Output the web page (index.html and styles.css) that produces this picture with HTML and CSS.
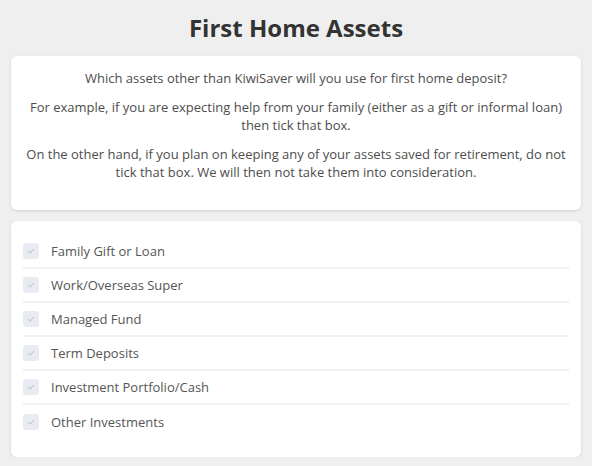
FILE: index.html
```html
<!DOCTYPE html>
<html lang="en">
<head>
<meta charset="utf-8">
<title>First Home Assets</title>
<link rel="stylesheet" href="styles.css">
</head>
<body>
<main class="page">
  <h1 class="title">First Home Assets</h1>
  <section class="card intro">
    <p>Which assets other than KiwiSaver will you use for first home deposit?</p>
    <p>For example, if you are expecting help from your family (either as a gift or informal loan) then tick that box.</p>
    <p>On the other hand, if you plan on keeping any of your assets saved for retirement, do not tick that box. We will then not take them into consideration.</p>
  </section>
  <section class="card options">
    <label class="option"><span class="box"><svg viewBox="0 0 16 16"><path d="M5.5 8.3l1.8 1.7 3.3-3.6"/></svg></span><span class="label">Family Gift or Loan</span></label>
    <label class="option"><span class="box"><svg viewBox="0 0 16 16"><path d="M5.5 8.3l1.8 1.7 3.3-3.6"/></svg></span><span class="label">Work/Overseas Super</span></label>
    <label class="option"><span class="box"><svg viewBox="0 0 16 16"><path d="M5.5 8.3l1.8 1.7 3.3-3.6"/></svg></span><span class="label">Managed Fund</span></label>
    <label class="option"><span class="box"><svg viewBox="0 0 16 16"><path d="M5.5 8.3l1.8 1.7 3.3-3.6"/></svg></span><span class="label">Term Deposits</span></label>
    <label class="option"><span class="box"><svg viewBox="0 0 16 16"><path d="M5.5 8.3l1.8 1.7 3.3-3.6"/></svg></span><span class="label">Investment Portfolio/Cash</span></label>
    <label class="option last"><span class="box"><svg viewBox="0 0 16 16"><path d="M5.5 8.3l1.8 1.7 3.3-3.6"/></svg></span><span class="label">Other Investments</span></label>
  </section>
</main>
</body>
</html>
```
FILE: styles.css
```css
html, body {
  margin: 0;
  padding: 0;
  background: #efefef;
}
body {
  font-family: "Open Sans", "Liberation Sans", sans-serif;
  color: #4d4d4d;
}
.page {
  padding: 0 11px;
  display: flex;
  flex-direction: column;
}
.title {
  margin: 0;
  height: 56px;
  display: flex;
  align-items: center;
  justify-content: center;
  font-size: 24px;
  font-weight: 700;
  color: #333333;
  letter-spacing: 0;
  padding-bottom: 2px;
  box-sizing: border-box;
}
.card {
  background: #ffffff;
  border-radius: 6px;
  box-shadow: 0 1px 3px rgba(0, 0, 0, 0.12);
}
.intro {
  padding: 13px 9px 29px;
  text-align: center;
  font-size: 13px;
  line-height: 18px;
}
.intro p {
  margin: 0 0 11px;
}
.intro p:last-child {
  margin-bottom: 0;
}
.options {
  margin-top: 11px;
  padding: 14px 12px 18px;
  display: flex;
  flex-direction: column;
}
.option {
  display: flex;
  align-items: center;
  gap: 12px;
  height: 34px;
  border-bottom: 2px solid #edf0f4;
  box-sizing: border-box;
  font-size: 13px;
  color: #555555;
}
.option.last {
  border-bottom: none;
}
.box {
  width: 16px;
  height: 16px;
  border-radius: 3px;
  background: #e8ebf1;
  display: flex;
}
.box svg {
  width: 16px;
  height: 16px;
  fill: none;
  stroke: #b4bac4;
  stroke-width: 1;
  stroke-linecap: round;
  stroke-linejoin: round;
}
```
